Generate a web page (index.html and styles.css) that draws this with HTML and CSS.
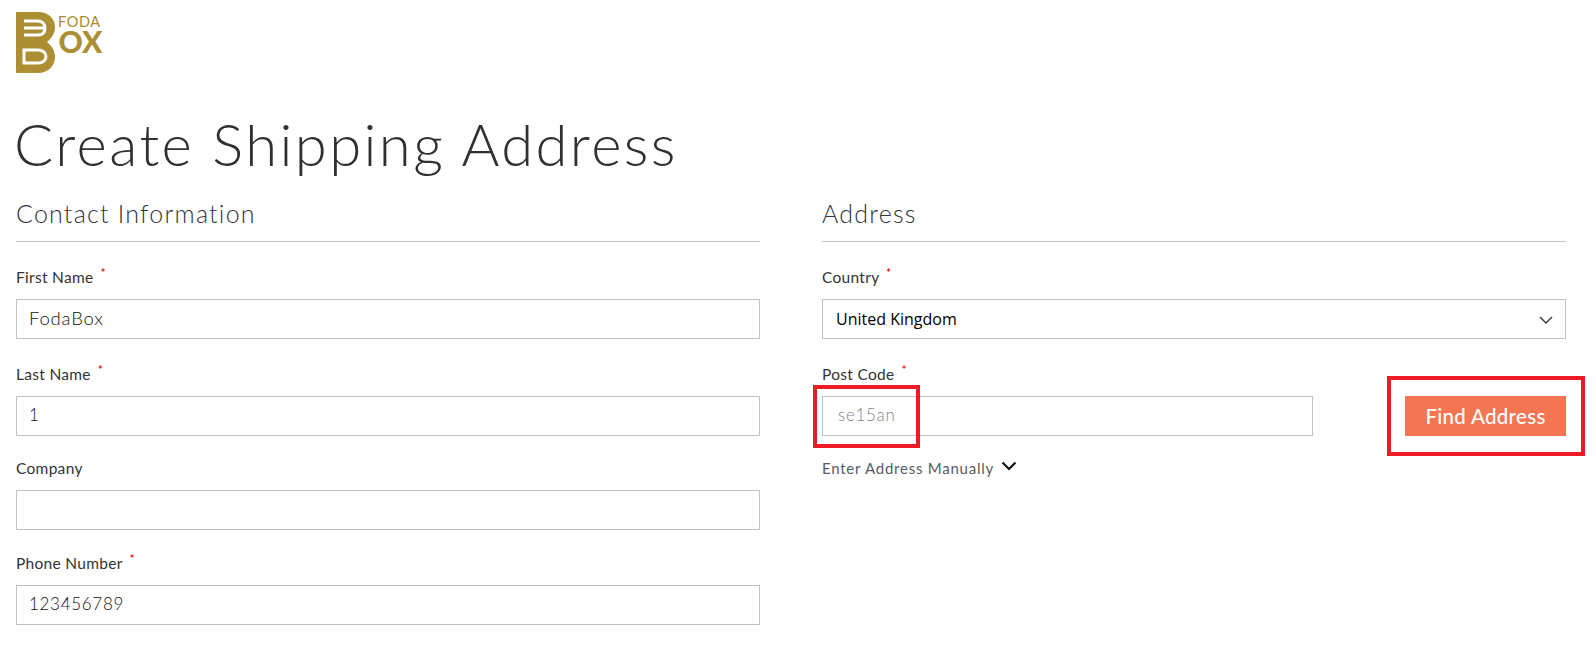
FILE: index.html
```html
<!DOCTYPE html>
<html lang="en">
<head>
<meta charset="utf-8">
<title>Create Shipping Address</title>
<link rel="stylesheet" href="styles.css">
</head>
<body>
<header class="brand">
  <svg class="logo" width="90" height="64" viewBox="16 11 90 64" aria-label="FodaBox">
    <path class="logo-b" d="M16 12H38C49 12 55 19 55 27C55 33 52 38 47 42C52 46 55 51 55 57C55 66 48 73 38 73H16Z"/>
    <path class="logo-cut" d="M24 21H38C43 21 45 25 45 28C45 32 43 35 38 35H24M24 28H45"/>
    <path class="logo-cut" d="M24 50H38C43 50 46 53 46 56.500C46 60 43 63 38 63H24Z"/>
    <text class="logo-foda" x="58" y="26.500">FODA</text>
    <text class="logo-ox" x="58.500" y="53">OX</text>
  </svg>
</header>
<h1 class="title">Create Shipping Address</h1>
<main class="columns">
  <section class="col">
    <h2 class="section-title">Contact Information</h2>
    <div class="field">
      <label class="label">First Name <sup class="req">*</sup></label>
      <input class="input input-wide" type="text" value="FodaBox">
    </div>
    <div class="field">
      <label class="label">Last Name <sup class="req">*</sup></label>
      <input class="input" type="text" value="1">
    </div>
    <div class="field field-company">
      <label class="label">Company</label>
      <input class="input" type="text" value="">
    </div>
    <div class="field field-phone">
      <label class="label">Phone Number <sup class="req">*</sup></label>
      <input class="input" type="text" value="123456789">
    </div>
  </section>
  <section class="col">
    <h2 class="section-title">Address</h2>
    <div class="field">
      <label class="label">Country <sup class="req">*</sup></label>
      <div class="select-wrap">
        <select class="input select"><option>United Kingdom</option></select>
        <svg class="select-arrow" width="14" height="8" viewBox="0 0 14 8"><path d="M1 1l6 6 6-6"/></svg>
      </div>
    </div>
    <div class="field">
      <label class="label">Post Code <sup class="req">*</sup></label>
      <div class="postcode-row">
        <input class="input postcode" type="text" placeholder="se15an">
        <button class="find-btn" type="button">Find Address</button>
        <span class="mark mark-input"></span>
        <span class="mark mark-btn"></span>
      </div>
    </div>
    <a class="manual">Enter Address Manually
      <svg width="16" height="10" viewBox="0 0 16 10"><path d="M1.500 1.500L8 8l6.500-6.500"/></svg>
    </a>
  </section>
</main>
</body>
</html>
```
FILE: styles.css
```css
* { box-sizing: border-box; }
html, body { height: 100%; }
body {
  margin: 0;
  padding: 0 30px 0 16px;
  overflow: hidden;
  background: #fff;
  color: #333;
  font-family: "Lato", "Liberation Sans", sans-serif;
}
.brand { height: 84px; padding-top: 11px; }
.logo { display: block; }
.logo-b { fill: #ad8f33; }
.logo-cut { fill: none; stroke: #fff; stroke-width: 3; }
.logo-foda { font: 400 14.500px "Lato", sans-serif; letter-spacing: 0.600px; fill: #a98a2c; }
.logo-ox { font: 900 30px "Lato", sans-serif; fill: #ad8f33; }
.title {
  margin: 24px 0 0 -2px;
  height: 72px;
  font-size: 58px;
  line-height: 72px;
  font-weight: 300;
  letter-spacing: 2.400px;
  color: #303030;
}
.columns {
  display: grid;
  grid-template-columns: 744px 744px;
  column-gap: 62px;
  margin-top: 14px;
}
.section-title {
  margin: 0 0 22px;
  height: 48px;
  padding-top: 3px;
  border-bottom: 1px solid #c4c4c4;
  font-size: 25px;
  line-height: 32px;
  font-weight: 300;
  letter-spacing: 1.220px;
  color: #33333d;
}
.field { margin-bottom: 22px; }
.label {
  display: block;
  height: 35px;
  padding-top: 3px;
  font-size: 15.500px;
  line-height: 20px;
  letter-spacing: 0.300px;
  color: #333;
}
.field-company .label { height: 32px; padding-top: 0; }
.field-phone .label { height: 33px; padding-top: 1px; }
.req {
  margin-left: 3px;
  color: #e21b23;
  font-size: 11px;
  font-weight: 700;
  line-height: 0;
}
.input {
  display: block;
  width: 100%;
  height: 40px;
  padding: 0 12px 3px;
  border: 1px solid #c2c2c2;
  border-radius: 0;
  background: #fff;
  font-family: "Lato", sans-serif;
  font-size: 17px;
  font-weight: 300;
  letter-spacing: 0.700px;
  color: #111;
  outline: none;
}
.input-wide { font-size: 18.500px; letter-spacing: 0.800px; }
.input::placeholder { color: #7f7f8c; opacity: 1; }
.select-wrap { position: relative; }
.select {
  appearance: none;
  -webkit-appearance: none;
  padding: 0 13px;
  font-family: "Open Sans", "Noto Sans", sans-serif;
  font-size: 16px;
  font-weight: 400;
  letter-spacing: 0;
  color: #000;
}
.select-arrow {
  position: absolute;
  top: 17px;
  right: 13px;
  fill: none;
  stroke: #333;
  stroke-width: 1.400;
}
.postcode-row {
  position: relative;
  display: flex;
  justify-content: space-between;
}
.postcode { width: 491px; padding-left: 15px; }
.find-btn {
  width: 161px;
  height: 40px;
  padding: 0;
  border: 0;
  background: #f47552;
  color: #fff;
  font-family: "Lato", sans-serif;
  font-size: 20.500px;
  font-weight: 500;
  letter-spacing: 0.300px;
}
.mark {
  position: absolute;
  border: 4px solid #ed1c24;
  pointer-events: none;
}
.mark-input { left: -9px; top: -11px; width: 107px; height: 63px; }
.mark-btn { right: -19px; top: -20px; width: 198px; height: 80px; }
.manual {
  display: flex;
  align-items: center;
  gap: 7px;
  margin-top: 1px;
  height: 20px;
  font-size: 15px;
  letter-spacing: 0.760px;
  color: #5a5a66;
}
.manual svg {
  margin-top: -4px;
  fill: none;
  stroke: #111;
  stroke-width: 2.200;
}
```
